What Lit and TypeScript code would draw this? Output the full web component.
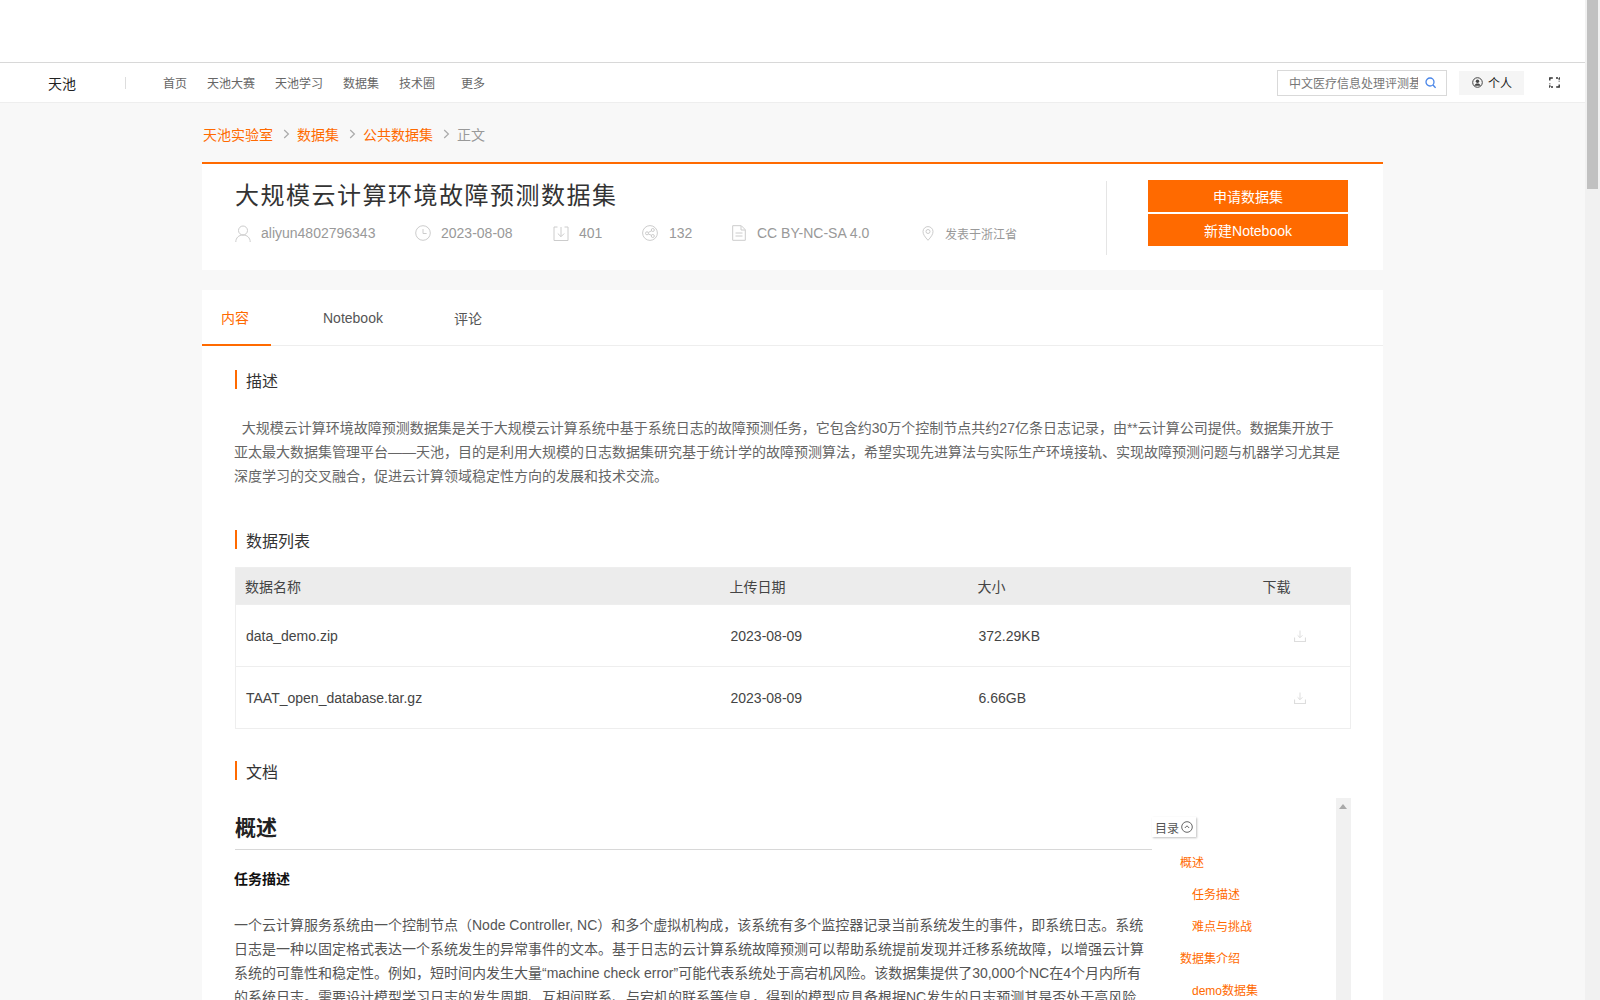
import { LitElement, html, css, svg } from 'lit';
import { customElement } from 'lit/decorators.js';

const navItems = [
  { label: '首页', width: 44 },
  { label: '天池大赛', width: 68 },
  { label: '天池学习', width: 68 },
  { label: '数据集', width: 56 },
  { label: '技术圈', width: 62 },
  { label: '更多', width: 24 },
];

const files = [
  { name: 'data_demo.zip', date: '2023-08-09', size: '372.29KB' },
  { name: 'TAAT_open_database.tar.gz', date: '2023-08-09', size: '6.66GB' },
];

const toc = [
  { label: '概述', sub: false },
  { label: '任务描述', sub: true },
  { label: '难点与挑战', sub: true },
  { label: '数据集介绍', sub: false },
  { label: 'demo数据集', sub: true },
];

const icon = (w: number, h: number, body: unknown, color = '#ccc') => html`<svg
  width=${w} height=${h} viewBox="0 0 ${w} ${h}" fill="none" stroke=${color} stroke-width="1">${body}</svg>`;

const userIcon = icon(16, 17, svg`<circle cx="8" cy="5.5" r="4.5"/><path d="M.8 17c0-4.2 3-7 7.2-7s7.2 2.8 7.2 7"/>`);
const clockIcon = icon(16, 16, svg`<circle cx="8" cy="8" r="7.3"/><path d="M8 4v4.5h3.6"/>`);
const downloadIcon = icon(16, 16, svg`<path d="M4.5 2H1v13.5h14V2h-3.5M8 2v9.5M4.8 8.5 8 11.7l3.2-3.2"/>`);
const shareIcon = icon(16, 16, svg`<circle cx="8" cy="8" r="7.4"/><circle cx="5" cy="8.3" r="1.5"/><circle cx="10.8" cy="5" r="1.5"/><circle cx="10.8" cy="11" r="1.5"/><path d="M6.3 7.5 9.5 5.8M6.3 9l3.2 1.3"/>`);
const docIcon = icon(14, 16, svg`<path d="M.7.7h8.6l4 4v10.6H.7zM9 1v4h4M3.5 8h7M3.5 11h7"/>`);
const pinIcon = icon(12, 15, svg`<path d="M6 14.3C3 11 1 8.4 1 5.6a5 5 0 0 1 10 0c0 2.8-2 5.4-5 8.7z"/><circle cx="6" cy="5.5" r="2"/>`);
const fileDownload = icon(12, 12, svg`<path d="M6 .5v7M3.6 5.3 6 7.7l2.4-2.4" stroke="#ddd"/><path d="M.5 7.5v4h11v-4" stroke="#ddd" stroke-width="1.2"/>`);
const chevron = icon(7, 10, svg`<path d="M1.2 1 5.4 5 1.2 9" stroke="#aaa" stroke-width="1.2"/>`);
const searchIcon = icon(11, 12, svg`<circle cx="5" cy="5" r="4" stroke="#4a86e8" stroke-width="1.3"/><path d="M8 8l2.6 2.8" stroke="#4a86e8" stroke-width="1.4"/>`);
const personIcon = icon(11, 11, svg`<circle cx="5.5" cy="5.5" r="4.8" stroke="#444"/><circle cx="5.5" cy="4.3" r="1.7" fill="#444" stroke="none"/><path d="M2.4 8.7c.6-1.6 1.7-2.2 3.1-2.2s2.5.6 3.1 2.2" fill="#444" stroke="none"/>`);
const swapIcon = icon(11, 11, svg`<path d="M.8 3.5V1h3M10.2 7.5V10h-3" stroke="#333" stroke-width="1.4"/><path d="M7 1h3.2v3.5M4 10H.8V6.5" stroke="#333" stroke-width="1.4" stroke-dasharray="2 1"/>`);
const upCircle = icon(12, 12, svg`<circle cx="6" cy="6" r="5.3" stroke="#666"/><path d="M3.8 7 6 4.8 8.2 7" stroke="#666"/>`);

@customElement('app-root')
export class AppRoot extends LitElement {
  static styles = css`
    :host {
      display: flex;
      height: 1000px;
      overflow: hidden;
      font-family: 'Liberation Sans', 'Noto Sans CJK SC', sans-serif;
      font-size: 14px;
      color: #666;
      background: #f8f8f8;
    }
    * { box-sizing: border-box; }
    svg { display: block; flex: none; }

    .page { flex: 1; min-width: 0; display: flex; flex-direction: column; }
    .page-scroll { width: 15px; flex: none; background: #f1f1f1; padding-left: 2px; }
    .page-thumb { width: 11px; height: 189px; background: #c1c1c1; }

    .top-gap { height: 63px; flex: none; background: #fff; border-bottom: 1px solid #d8d8d8; }
    .nav {
      height: 40px;
      flex: none;
      display: flex;
      align-items: center;
      background: #fff;
      border-bottom: 1px solid #eee;
      padding-left: 48px;
      font-size: 12px;
    }
    .logo { width: 77px; font-size: 14px; color: #222; }
    .nav-sep { width: 1px; height: 12px; background: #ddd; margin-right: 37px; }
    .nav-item { flex: none; color: #666; }
    .nav-right { margin-left: auto; display: flex; align-items: center; padding-right: 25px; }
    .search {
      width: 170px;
      height: 26px;
      border: 1px solid #d9d9d9;
      display: flex;
      align-items: center;
      padding: 0 10px 0 11px;
      gap: 7px;
      margin-right: 12px;
    }
    .search span { width: 129px; overflow: hidden; white-space: nowrap; color: #777; }
    .personal {
      width: 65px;
      height: 24px;
      background: #f5f5f5;
      color: #222;
      display: flex;
      align-items: center;
      padding-left: 13px;
      gap: 5px;
      margin-right: 25px;
    }

    .main { width: 1181px; margin-left: 202px; flex: none; }
    .crumbs {
      height: 59px;
      display: flex;
      align-items: center;
      color: #ff6a00;
      padding: 2px 0 0 1px;
    }
    .crumbs svg { margin: 0 7px 0 10px; }
    .crumbs .here { color: #999; }

    .head {
      height: 108px;
      background: #fff;
      border-top: 2px solid #ff6a00;
      display: flex;
      padding: 16px 35px 0 33px;
    }
    .head-left { flex: 1; min-width: 0; border-right: 1px solid #e5e5e5; height: 74px; margin-top: 1px; }
    h1.title {
      margin: 0;
      font-size: 24px;
      font-weight: 400;
      letter-spacing: 1.5px;
      color: #333;
      line-height: 30px;
    }
    .meta { display: flex; align-items: center; margin-top: 12px; color: #999; height: 20px; }
    .meta-item { display: flex; align-items: center; flex: none; }
    .meta-item span { white-space: nowrap; }
    .small { font-size: 12px; }
    .actions { width: 200px; margin-left: 41px; display: flex; flex-direction: column; gap: 2px; margin-top: 0; }
    .btn {
      height: 32px;
      background: #ff6a00;
      color: #fff;
      display: flex;
      align-items: center;
      justify-content: center;
    }

    .content { background: #fff; margin-top: 20px; padding-bottom: 40px; }
    .tabs { height: 56px; display: flex; border-bottom: 1px solid #eee; }
    .tab { display: flex; align-items: center; color: #555; }
    .tab.active { width: 69px; padding-left: 19px; color: #ff6a00; border-bottom: 2px solid #ff6a00; height: 56px; }
    .tab.nb { margin-left: 52px; }
    .tab.cm { margin-left: 71px; }

    .section { padding: 0 32px 0 33px; }
    .sec-title {
      display: flex;
      align-items: center;
      height: 19px;
      border-left: 2px solid #ff6a00;
      padding-left: 9px;
      font-size: 16px;
      color: #333;
    }
    .intro {
      margin: 27px 8px 0 -1px;
      line-height: 24px;
      color: #666;
      white-space: pre-wrap;
    }
    table {
      width: 100%;
      border-collapse: collapse;
      table-layout: fixed;
      margin-top: 18px;
      border: 1px solid #eee;
      color: #444;
    }
    th {
      height: 37px;
      background: #ececec;
      font-weight: 400;
      text-align: left;
      padding: 0 0 0 9px;
      color: #444;
    }
    td { height: 62px; padding: 0 0 0 10px; border-top: 1px solid #eee; }
    td.dl { padding-left: 31px; }
    .col1 { width: 485px; }
    .col2 { width: 248px; }
    .col3 { width: 294px; }

    .doc { margin-top: 18px; height: 400px; display: flex; }
    .doc-body { width: 917px; flex: none; }
    .doc-h1 {
      margin: 0;
      padding-left: 0;
      height: 52px;
      display: flex;
      align-items: flex-end;
      padding-bottom: 8px;
      font-size: 21px;
      font-weight: 700;
      color: #222;
      border-bottom: 1px solid #d8d8d8;
    }
    .doc-h3 { margin: 19px 0 0 -1px; font-size: 14px; font-weight: 700; color: #111; line-height: 20px; }
    .doc-p { margin: 24px 0 0 -1px; width: 912px; line-height: 24px; color: #555; }
    .toc-col { width: 184px; flex: none; padding-top: 19px; }
    .toc-btn {
      width: 44px;
      height: 20px;
      display: flex;
      align-items: center;
      gap: 2px;
      padding-left: 3px;
      font-size: 12px;
      color: #555;
      background: #fff;
      box-shadow: 1px 1px 2px rgba(0, 0, 0, 0.25);
    }
    .toc { margin-top: 10px; font-size: 12px; color: #ff6a00; }
    .toc div { height: 32px; line-height: 32px; padding-left: 28px; }
    .toc div.sub { padding-left: 40px; }
    .doc-scroll { width: 15px; flex: none; background: #f1f1f1; padding: 6px 0 0 3px; }
    .arrow {
      width: 0;
      border-left: 4px solid transparent;
      border-right: 4px solid transparent;
      border-bottom: 5px solid #a9a9a9;
    }
  `;

  metaItem(ico: unknown, text: string, textGap: number, width: number, small = false) {
    return html`<div class="meta-item" style="width:${width}px">
      ${ico}<span class=${small ? 'small' : ''} style="margin-left:${textGap}px">${text}</span>
    </div>`;
  }

  render() {
    return html`
      <div class="page">
        <div class="top-gap"></div>
        <div class="nav">
          <div class="logo">天池</div>
          <div class="nav-sep"></div>
          ${navItems.map(n => html`<div class="nav-item" style="width:${n.width - 24 + 24}px">${n.label}</div>`)}
          <div class="nav-right">
            <div class="search"><span>中文医疗信息处理评测基准CBLUE</span>${searchIcon}</div>
            <div class="personal">${personIcon}个人</div>
            ${swapIcon}
          </div>
        </div>

        <div class="main">
          <div class="crumbs">
            天池实验室${chevron}数据集${chevron}公共数据集${chevron}<span class="here">正文</span>
          </div>
          <div class="head">
            <div class="head-left">
              <h1 class="title">大规模云计算环境故障预测数据集</h1>
              <div class="meta">
                ${this.metaItem(userIcon, 'aliyun4802796343', 10, 180)}
                ${this.metaItem(clockIcon, '2023-08-08', 10, 138)}
                ${this.metaItem(downloadIcon, '401', 10, 89)}
                ${this.metaItem(shareIcon, '132', 11, 90)}
                ${this.metaItem(docIcon, 'CC BY-NC-SA 4.0', 11, 190)}
                ${this.metaItem(pinIcon, '发表于浙江省', 11, 100, true)}
              </div>
            </div>
            <div class="actions">
              <div class="btn">申请数据集</div>
              <div class="btn">新建Notebook</div>
            </div>
          </div>

          <div class="content">
            <div class="tabs">
              <div class="tab active">内容</div>
              <div class="tab nb">Notebook</div>
              <div class="tab cm">评论</div>
            </div>
            <div class="section" style="padding-top:24px">
              <div class="sec-title">描述</div>
              <p class="intro">  大规模云计算环境故障预测数据集是关于大规模云计算系统中基于系统日志的故障预测任务，它包含约30万个控制节点共约27亿条日志记录，由**云计算公司提供。数据集开放于亚太最大数据集管理平台——天池，目的是利用大规模的日志数据集研究基于统计学的故障预测算法，希望实现先进算法与实际生产环境接轨、实现故障预测问题与机器学习尤其是深度学习的交叉融合，促进云计算领域稳定性方向的发展和技术交流。</p>
            </div>
            <div class="section" style="padding-top:42px">
              <div class="sec-title">数据列表</div>
              <table>
                <colgroup><col class="col1" /><col class="col2" /><col class="col3" /><col /></colgroup>
                <thead><tr><th>数据名称</th><th>上传日期</th><th>大小</th><th style="padding-left:0">下载</th></tr></thead>
                <tbody>
                  ${files.map(f => html`<tr><td>${f.name}</td><td>${f.date}</td><td>${f.size}</td><td class="dl">${fileDownload}</td></tr>`)}
                </tbody>
              </table>
            </div>
            <div class="section" style="padding-top:32px">
              <div class="sec-title">文档</div>
              <div class="doc">
                <div class="doc-body">
                  <h2 class="doc-h1">概述</h2>
                  <h3 class="doc-h3">任务描述</h3>
                  <p class="doc-p">一个云计算服务系统由一个控制节点（Node Controller, NC）和多个虚拟机构成，该系统有多个监控器记录当前系统发生的事件，即系统日志。系统日志是一种以固定格式表达一个系统发生的异常事件的文本。基于日志的云计算系统故障预测可以帮助系统提前发现并迁移系统故障，以增强云计算系统的可靠性和稳定性。例如，短时间内发生大量“machine check error”可能代表系统处于高宕机风险。该数据集提供了30,000个NC在4个月内所有的系统日志。需要设计模型学习日志的发生周期、互相间联系、与宕机的联系等信息，得到的模型应具备根据NC发生的日志预测其是否处于高风险</p>
                </div>
                <div class="toc-col">
                  <div class="toc-btn">目录${upCircle}</div>
                  <div class="toc">
                    ${toc.map(t => html`<div class=${t.sub ? 'sub' : ''}>${t.label}</div>`)}
                  </div>
                </div>
                <div class="doc-scroll"><div class="arrow"></div></div>
              </div>
            </div>
          </div>
        </div>
      </div>
      <div class="page-scroll"><div class="page-thumb"></div></div>
    `;
  }
}
